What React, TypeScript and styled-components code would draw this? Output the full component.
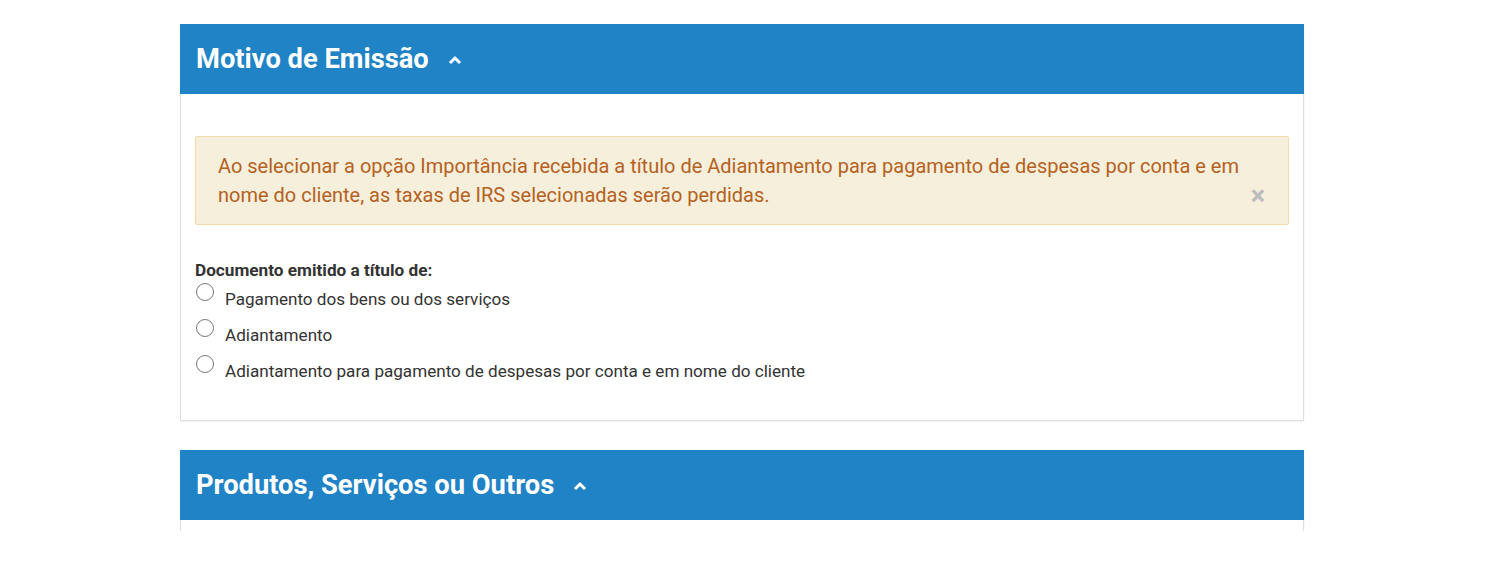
import React from "react"
import styled, { createGlobalStyle } from "styled-components"

const GlobalStyle = createGlobalStyle`
  body {
    margin: 0;
    background: #fff;
    font-family: Roboto, "Liberation Sans", sans-serif;
    color: #333;
  }
`

const Page = styled.div`
  height: 531px;
  overflow: hidden;
  padding: 24px 0 0 180px;
  box-sizing: border-box;
`

const Panel = styled.section`
  width: 1124px;
  box-sizing: border-box;
  border: 1px solid #dedede;
  border-top: none;
  box-shadow: 0 1px 2px rgba(0, 0, 0, 0.06);
  background: #fff;
  & + & {
    margin-top: 29px;
  }
`

const PanelHeader = styled.header`
  height: 70px;
  margin: 0 -1px;
  background: #1f83c6;
  display: flex;
  align-items: center;
  padding: 0 16px;
  color: #fff;
`

const PanelTitle = styled.h2`
  margin: 0;
  font-size: 27.3px;
  font-weight: 700;
`

const Chevron = styled.span`
  display: inline-flex;
  margin-left: 19px;
  margin-top: 2px;
`

const PanelBody = styled.div`
  padding: 42px 14px 32px;
`

const Alert = styled.div`
  position: relative;
  background: #f5efdb;
  border: 1px solid #f2dcae;
  border-radius: 2px;
  color: #b5611f;
  font-size: 20px;
  line-height: 29px;
  padding: 15px 46px 14px 22px;
`

const Close = styled.span`
  position: absolute;
  right: 23px;
  bottom: 14px;
  color: #bcbcbc;
  font-size: 27px;
  font-weight: 700;
  line-height: 1;
`

const FieldLabel = styled.div`
  margin-top: 35px;
  font-size: 17.2px;
  line-height: 20px;
  font-weight: 700;
  color: #333;
`

const Option = styled.label`
  display: flex;
  align-items: flex-start;
  height: 36px;
  font-size: 17.1px;
  line-height: 20px;
  color: #333;
`

const Radio = styled.span`
  width: 16px;
  height: 16px;
  border: 1px solid #777;
  border-radius: 50%;
  margin: 3px 11px 0 1px;
  flex-shrink: 0;
`

const OptionText = styled.span`
  padding-top: 9px;
`

const ChevronUp = () => (
  <svg width="14" height="10" viewBox="0 0 14 10">
    <path d="M2 8 L7 3 L12 8" fill="none" stroke="#fff" strokeWidth="3" />
  </svg>
)

const options = [
  "Pagamento dos bens ou dos serviços",
  "Adiantamento",
  "Adiantamento para pagamento de despesas por conta e em nome do cliente",
]

const App = () => (
  <Page>
    <GlobalStyle />
    <Panel>
      <PanelHeader>
        <PanelTitle>Motivo de Emissão</PanelTitle>
        <Chevron>
          <ChevronUp />
        </Chevron>
      </PanelHeader>
      <PanelBody>
        <Alert>
          Ao selecionar a opção Importância recebida a título de Adiantamento para pagamento de
          despesas por conta e em nome do cliente, as taxas de IRS selecionadas serão perdidas.
          <Close>×</Close>
        </Alert>
        <FieldLabel>Documento emitido a título de:</FieldLabel>
        {options.map((o) => (
          <Option key={o}>
            <Radio />
            <OptionText>{o}</OptionText>
          </Option>
        ))}
      </PanelBody>
    </Panel>
    <Panel>
      <PanelHeader>
        <PanelTitle>Produtos, Serviços ou Outros</PanelTitle>
        <Chevron>
          <ChevronUp />
        </Chevron>
      </PanelHeader>
      <PanelBody />
    </Panel>
  </Page>
)

export default App
